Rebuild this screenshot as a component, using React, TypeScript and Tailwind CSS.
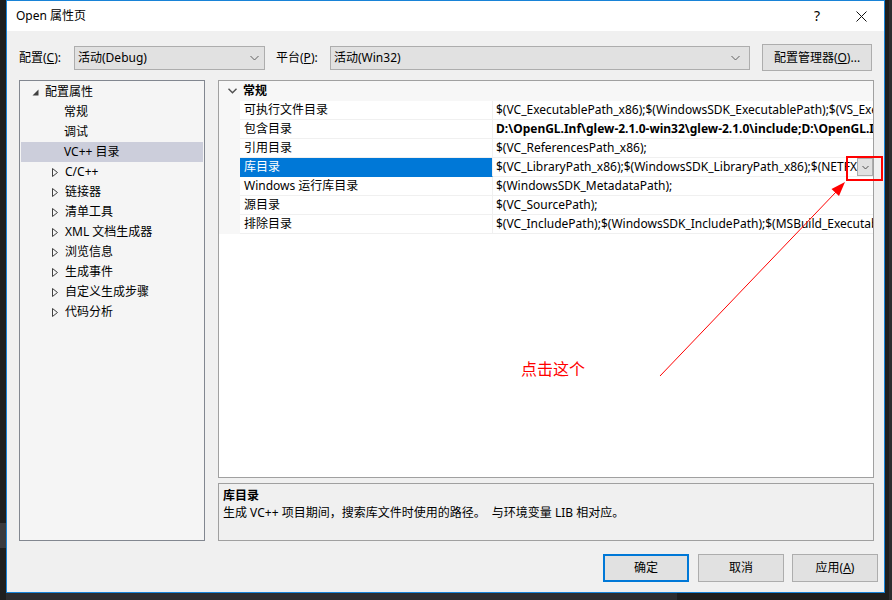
import React from "react";

const FONT = { fontFamily: '"Noto Sans", "Noto Sans CJK SC", sans-serif' };

function Chevron({ className = "" }: { className?: string }) {
  return (
    <svg width="9" height="6" viewBox="0 0 9 6" className={className}>
      <path d="M0.5 1 L4.5 5 L8.5 1" fill="none" stroke="#606060" strokeWidth="1" />
    </svg>
  );
}

function TriClosed() {
  return (
    <svg width="6" height="9" viewBox="0 0 6 9">
      <path d="M0.5 0.5 L5.5 4.5 L0.5 8.5 Z" fill="none" stroke="#404040" strokeWidth="1" />
    </svg>
  );
}

function TriOpen() {
  return (
    <svg width="7" height="7" viewBox="0 0 7 7">
      <path d="M6.5 0.5 L6.5 6.5 L0.5 6.5 Z" fill="#404040" />
    </svg>
  );
}

const treeChildren = ["常规", "调试", "VC++ 目录"];
const treeCollapsed = ["C/C++", "链接器", "清单工具", "XML 文档生成器", "浏览信息", "生成事件", "自定义生成步骤", "代码分析"];

const rows: { name: string; value: string; bold?: boolean; selected?: boolean }[] = [
  { name: "可执行文件目录", value: "$(VC_ExecutablePath_x86);$(WindowsSDK_ExecutablePath);$(VS_ExecutablePath);$(MSBuild_ExecutablePath)" },
  { name: "包含目录", value: "D:\\OpenGL.Inf\\glew-2.1.0-win32\\glew-2.1.0\\include;D:\\OpenGL.Inf\\glfw\\include", bold: true },
  { name: "引用目录", value: "$(VC_ReferencesPath_x86);" },
  { name: "库目录", value: "$(VC_LibraryPath_x86);$(WindowsSDK_LibraryPath_x86);$(NETFXKitsDir)Lib\\um\\x86", selected: true },
  { name: "Windows 运行库目录", value: "$(WindowsSDK_MetadataPath);" },
  { name: "源目录", value: "$(VC_SourcePath);" },
  { name: "排除目录", value: "$(VC_IncludePath);$(WindowsSDK_IncludePath);$(MSBuild_ExecutablePath);$(VC_LibraryPath_x86)" },
];

export default function App() {
  return (
    <div className="w-[892px] h-[600px] bg-[#1e1e1e] flex overflow-hidden relative text-[12px] text-black" style={FONT}>
      {/* left desktop strip */}
      <div className="w-[6px] flex flex-col">
        <div className="h-[523px]" />
        <div className="h-[25px] bg-[#3a3a3d]" />
      </div>

      {/* dialog column */}
      <div className="w-[879px] flex flex-col">
        <div className="h-[593px] border border-[#1883d7] bg-[#f0f0f0] flex flex-col">
          {/* title bar */}
          <div className="h-[30px] bg-white flex items-center pl-[9px] shrink-0">
            <span className="leading-none">Open 属性页</span>
            <div className="flex-1" />
            <span className="text-[14px] leading-none mr-[36px]">?</span>
            <svg width="11" height="11" viewBox="0 0 11 11" className="mr-[17px]">
              <path d="M0.5 0.5 L10.5 10.5 M10.5 0.5 L0.5 10.5" stroke="#111" strokeWidth="1" />
            </svg>
          </div>

          {/* config row */}
          <div className="mt-[13px] h-[27px] flex items-center pl-[12px] shrink-0">
            <span className="w-[55px]">配置(<span className="underline">C</span>):</span>
            <div className="w-[191px] h-[24px] bg-[#e1e1e1] border border-[#adadad] flex items-center pl-[3px] pr-[5px]">
              <span className="flex-1">活动(Debug)</span>
              <Chevron />
            </div>
            <span className="w-[54px] ml-[11px]">平台(<span className="underline">P</span>):</span>
            <div className="w-[420px] h-[24px] bg-[#e1e1e1] border border-[#adadad] flex items-center pl-[3px] pr-[9px]">
              <span className="flex-1">活动(Win32)</span>
              <Chevron />
            </div>
            <div className="ml-[12px] w-[110px] h-[27px] bg-[#e1e1e1] border border-[#adadad] flex items-center justify-center">
              配置管理器(<span className="underline">O</span>)...
            </div>
          </div>

          {/* main area */}
          <div className="mt-[9px] h-[461px] flex pl-[12px] shrink-0">
            {/* tree */}
            <div className="w-[186px] h-full border border-[#828790] bg-[#f5f5f5] pt-[1px] pl-[1px] pr-[1px]">
              <div className="h-[20px] flex items-center">
                <span className="w-[12px] ml-[11px] flex items-center"><TriOpen /></span>
                <span className="ml-[1px]">配置属性</span>
              </div>
              {treeChildren.map((t, i) => (
                <div key={t} className={`h-[20px] flex items-center pl-[43px] ${i === 2 ? "bg-[#cccedb]" : ""}`}>
                  {t}
                </div>
              ))}
              {treeCollapsed.map((t) => (
                <div key={t} className="h-[20px] flex items-center">
                  <span className="ml-[31px] w-[13px] flex items-center"><TriClosed /></span>
                  <span>{t}</span>
                </div>
              ))}
            </div>

            <div className="w-[13px]" />

            {/* right column */}
            <div className="w-[656px] h-full flex flex-col">
              {/* grid */}
              <div className="h-[398px] border border-[#a0a0a0] bg-white flex flex-col overflow-hidden">
                <div className="h-[20px] bg-[#f7f7f7] flex items-center shrink-0">
                  <span className="w-[24px] flex justify-center pl-[2px]">
                    <svg width="9" height="6" viewBox="0 0 9 6">
                      <path d="M0.5 0.8 L4.5 4.8 L8.5 0.8" fill="none" stroke="#505050" strokeWidth="1.4" />
                    </svg>
                  </span>
                  <span className="font-bold">常规</span>
                </div>
                {rows.map((r) => (
                  <div key={r.name} className="h-[19px] flex shrink-0">
                    <div className="w-[21px] bg-[#f7f7f7]" />
                    <div
                      className={`w-[253px] flex items-center pl-[4px] border-r border-b border-[#f0f0f0] whitespace-nowrap ${
                        r.selected ? "bg-[#0078d7] text-white border-b-[#0078d7]" : ""
                      }`}
                    >
                      {r.name}
                    </div>
                    <div className="flex-1 flex items-center border-b border-[#f0f0f0] min-w-0">
                      <span className={`flex-1 min-w-0 overflow-hidden whitespace-nowrap pl-[3px] ${r.bold ? "font-bold" : ""}`}>
                        {r.value}
                      </span>
                      {r.selected && (
                        <div className="w-[16px] h-[18px] bg-[#e1e1e1] border border-[#adadad] flex items-center justify-center shrink-0">
                          <svg width="7" height="5" viewBox="0 0 7 5">
                            <path d="M0.5 1 L3.5 4 L6.5 1" fill="none" stroke="#505050" strokeWidth="1" />
                          </svg>
                        </div>
                      )}
                    </div>
                  </div>
                ))}
                <div className="flex-1 flex">
                  <div className="w-[21px] bg-white" />
                </div>
              </div>

              {/* description */}
              <div className="mt-[5px] h-[58px] border border-[#a0a0a0] bg-[#f0f0f0] pl-[4px] pt-[3px]">
                <div className="font-bold leading-[17px]">库目录</div>
                <div className="leading-[17px] whitespace-pre">生成 VC++ 项目期间，搜索库文件时使用的路径。  与环境变量 LIB 相对应。</div>
              </div>
            </div>
          </div>

          {/* buttons */}
          <div className="mt-[13px] h-[28px] flex justify-end pr-[6px] shrink-0">
            <div className="w-[86px] h-[28px] border-2 border-[#0078d7] bg-[#e1e1e1] flex items-center justify-center">确定</div>
            <div className="ml-[9px] w-[86px] h-[28px] border border-[#adadad] bg-[#e1e1e1] flex items-center justify-center">取消</div>
            <div className="ml-[8px] w-[86px] h-[28px] border border-[#adadad] bg-[#e1e1e1] flex items-center justify-center">
              应用(<span className="underline">A</span>)
            </div>
          </div>
        </div>
        {/* bottom desktop strip */}
        <div className="flex-1 flex">
          <div className="w-[671px] bg-[#2d2d30]" />
        </div>
      </div>

      {/* right desktop strip */}
      <div className="flex-1 flex justify-end">
        <div className="w-[3px] bg-[#2d2d30]" />
      </div>

      {/* annotations */}
      <div className="absolute left-[846px] top-[156px] w-[37px] h-[25px] border-2 border-[#ff0000]" />
      <svg className="absolute left-0 top-0 pointer-events-none" width="892" height="600">
        <line x1="660" y1="376" x2="836" y2="192" stroke="#ff0000" strokeWidth="1" />
        <polygon points="845,182 839,196 831.5,189" fill="#ff0000" />
      </svg>
      <div className="absolute left-[521px] top-[357px] text-[16px] leading-[22px] text-[#ff0000]" style={{ fontFamily: '"Noto Sans CJK SC", sans-serif' }}>
        点击这个
      </div>
    </div>
  );
}
